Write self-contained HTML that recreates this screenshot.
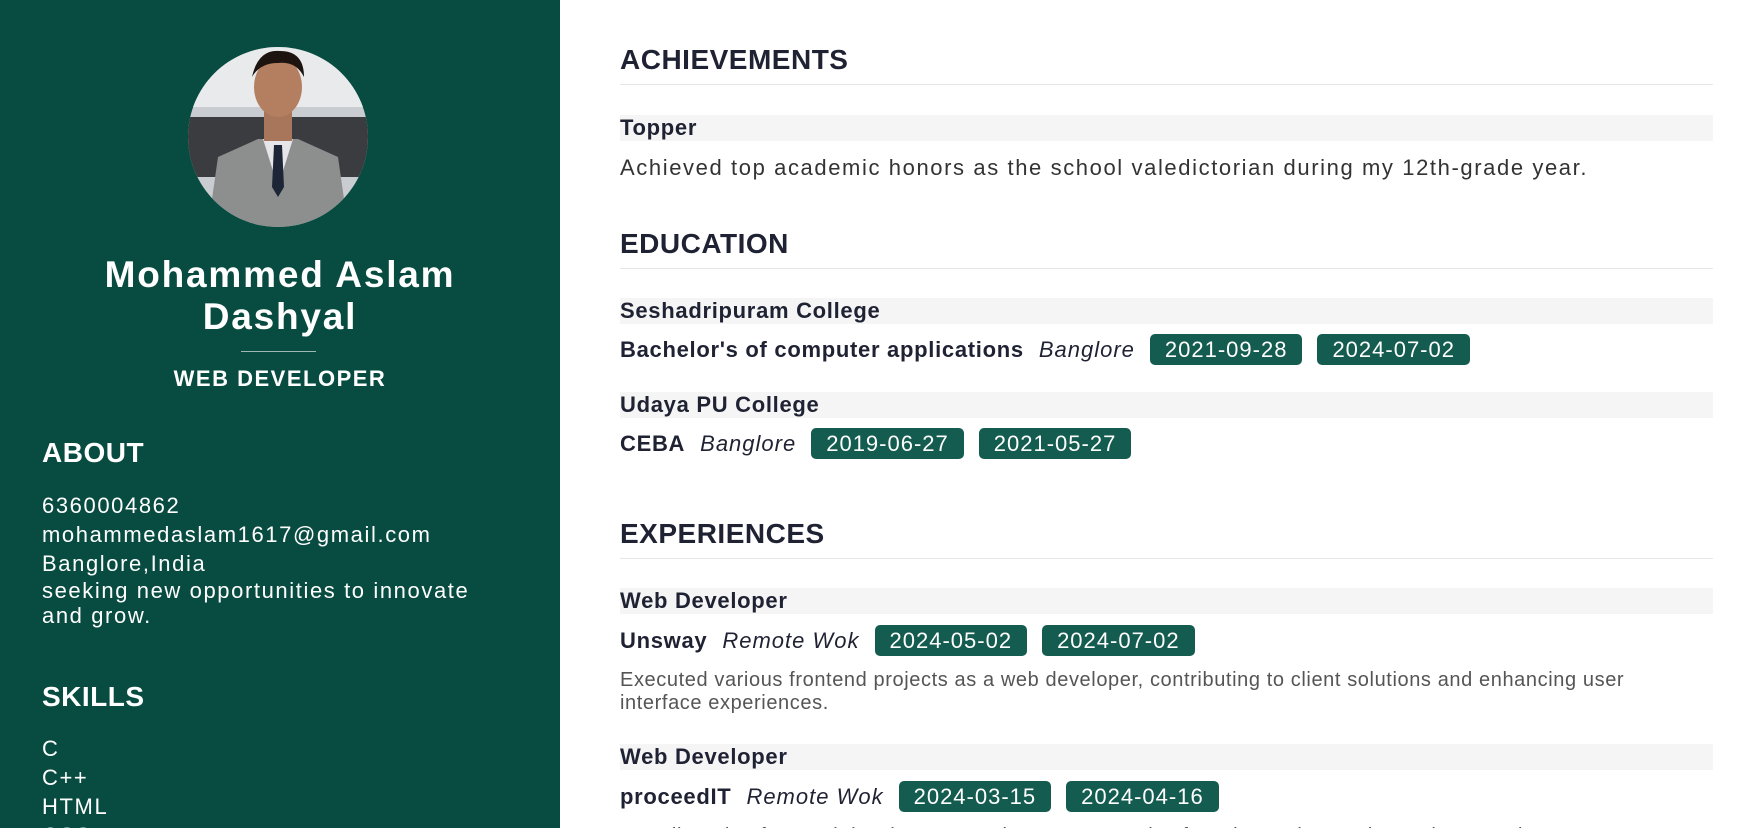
<!DOCTYPE html>
<html style="height:828px;overflow:hidden"><head><meta charset="utf-8"><style>
*{margin:0;padding:0;box-sizing:border-box}
body{width:1741px;height:828px;overflow:hidden;font-family:"Liberation Sans",sans-serif;background:#fff;position:relative}
.side{position:absolute;left:0;top:0;width:560px;height:828px;background:#084c41;color:#fff}
.abs{position:absolute}
.name{left:0;width:560px;text-align:center;font-weight:bold;font-size:37px;line-height:42px;top:254px;letter-spacing:1.8px}
.div{left:241px;top:351px;width:75px;height:1px;background:#9fb8b2}
.role{left:0;width:560px;text-align:center;top:366px;font-size:22px;font-weight:bold;letter-spacing:1.5px}
.sh{left:42px;font-size:28px;font-weight:bold;letter-spacing:.5px}
.st{left:42px;width:450px;font-size:22px;line-height:29px;letter-spacing:1.6px}
.main{position:absolute;left:620px;width:1093px}
.h{font-size:28px;font-weight:bold;color:#1f2233;letter-spacing:.5px;border-bottom:1px solid #e6e6e6;padding-bottom:8px}
.bar{background:#f5f5f5;font-size:22px;font-weight:bold;color:#1f2233;height:26px;line-height:26px;position:absolute;left:0;width:1093px;letter-spacing:.7px}
.row{position:absolute;left:0;font-size:22px;color:#1f2233;display:flex;align-items:center;white-space:nowrap}
.row b{margin-right:15px;letter-spacing:.7px}
.row i{margin-right:15px;letter-spacing:1px}
.badge{background:#145c4f;color:#fff;border-radius:5px;padding:0 15px;height:31px;line-height:31px;margin-right:15px;font-size:22px;letter-spacing:1px}
.desc{position:absolute;left:0;font-size:20px;line-height:23px;color:#555;width:1075px;letter-spacing:.6px}
</style></head><body>
<div class="side">
<svg class="abs" style="left:188px;top:47px" width="180" height="180" viewBox="0 0 180 180">
<defs><clipPath id="c"><circle cx="90" cy="90" r="90"/></clipPath></defs>
<g clip-path="url(#c)">
<rect width="180" height="180" fill="#c9ccd0"/>
<rect y="0" width="180" height="60" fill="#e8eaec"/>
<rect y="70" width="180" height="60" fill="#3a3c40"/>
<path d="M20 180 L30 110 L70 92 L110 92 L150 110 L160 180Z" fill="#8d8f8e"/>
<path d="M75 92 L90 140 L105 92Z" fill="#e6e6ea"/>
<path d="M86 98 L94 98 L96 140 L90 150 L84 140Z" fill="#1d2636"/>
<rect x="76" y="52" width="28" height="42" fill="#a8765a"/>
<ellipse cx="90" cy="40" rx="24" ry="30" fill="#b47f60"/>
<path d="M64 30 Q70 2 92 4 Q116 4 116 30 Q108 14 90 16 Q72 16 64 30Z" fill="#1d1410"/>
</g></svg>
<div class="abs name">Mohammed Aslam<br>Dashyal</div>
<div class="abs div"></div>
<div class="abs role">WEB DEVELOPER</div>
<div class="abs sh" style="top:437px">ABOUT</div>
<div class="abs st" style="top:491px">6360004862<br>mohammedaslam1617@gmail.com<br>Banglore,India<br><span style="display:block;line-height:25px">seeking new opportunities to innovate and grow.</span></div>
<div class="abs sh" style="top:681px">SKILLS</div>
<div class="abs st" style="top:734px">C<br>C++<br>HTML<br>CSS</div>
</div>

<div class="main" style="top:44px"><div class="h">ACHIEVEMENTS</div></div>
<div class="main" style="top:0;height:828px">
<div class="bar" style="top:115px">Topper</div>
<div class="row" style="top:155px;font-size:22px;color:#333;letter-spacing:1.6px">Achieved top academic honors as the school valedictorian during my 12th-grade year.</div>
</div>
<div class="main" style="top:228px"><div class="h">EDUCATION</div></div>
<div class="main" style="top:0">
<div class="bar" style="top:298px">Seshadripuram College</div>
<div class="row" style="top:334px"><b>Bachelor's of computer applications</b><i>Banglore</i><span class="badge">2021-09-28</span><span class="badge">2024-07-02</span></div>
<div class="bar" style="top:392px">Udaya PU College</div>
<div class="row" style="top:428px"><b>CEBA</b><i>Banglore</i><span class="badge">2019-06-27</span><span class="badge">2021-05-27</span></div>
</div>
<div class="main" style="top:518px"><div class="h">EXPERIENCES</div></div>
<div class="main" style="top:0">
<div class="bar" style="top:588px">Web Developer</div>
<div class="row" style="top:625px"><b>Unsway</b><i>Remote Wok</i><span class="badge">2024-05-02</span><span class="badge">2024-07-02</span></div>
<div class="desc" style="top:669px">Executed various frontend projects as a web developer, contributing to client solutions and enhancing user interface experiences.</div>
<div class="bar" style="top:744px">Web Developer</div>
<div class="row" style="top:781px"><b>proceedIT</b><i>Remote Wok</i><span class="badge">2024-03-15</span><span class="badge">2024-04-16</span></div>
<div class="desc" style="top:825px">Contributed to frontend development projects at proceedIT, focusing on interactive and responsive user interfaces.</div>
</div>
</body></html>
